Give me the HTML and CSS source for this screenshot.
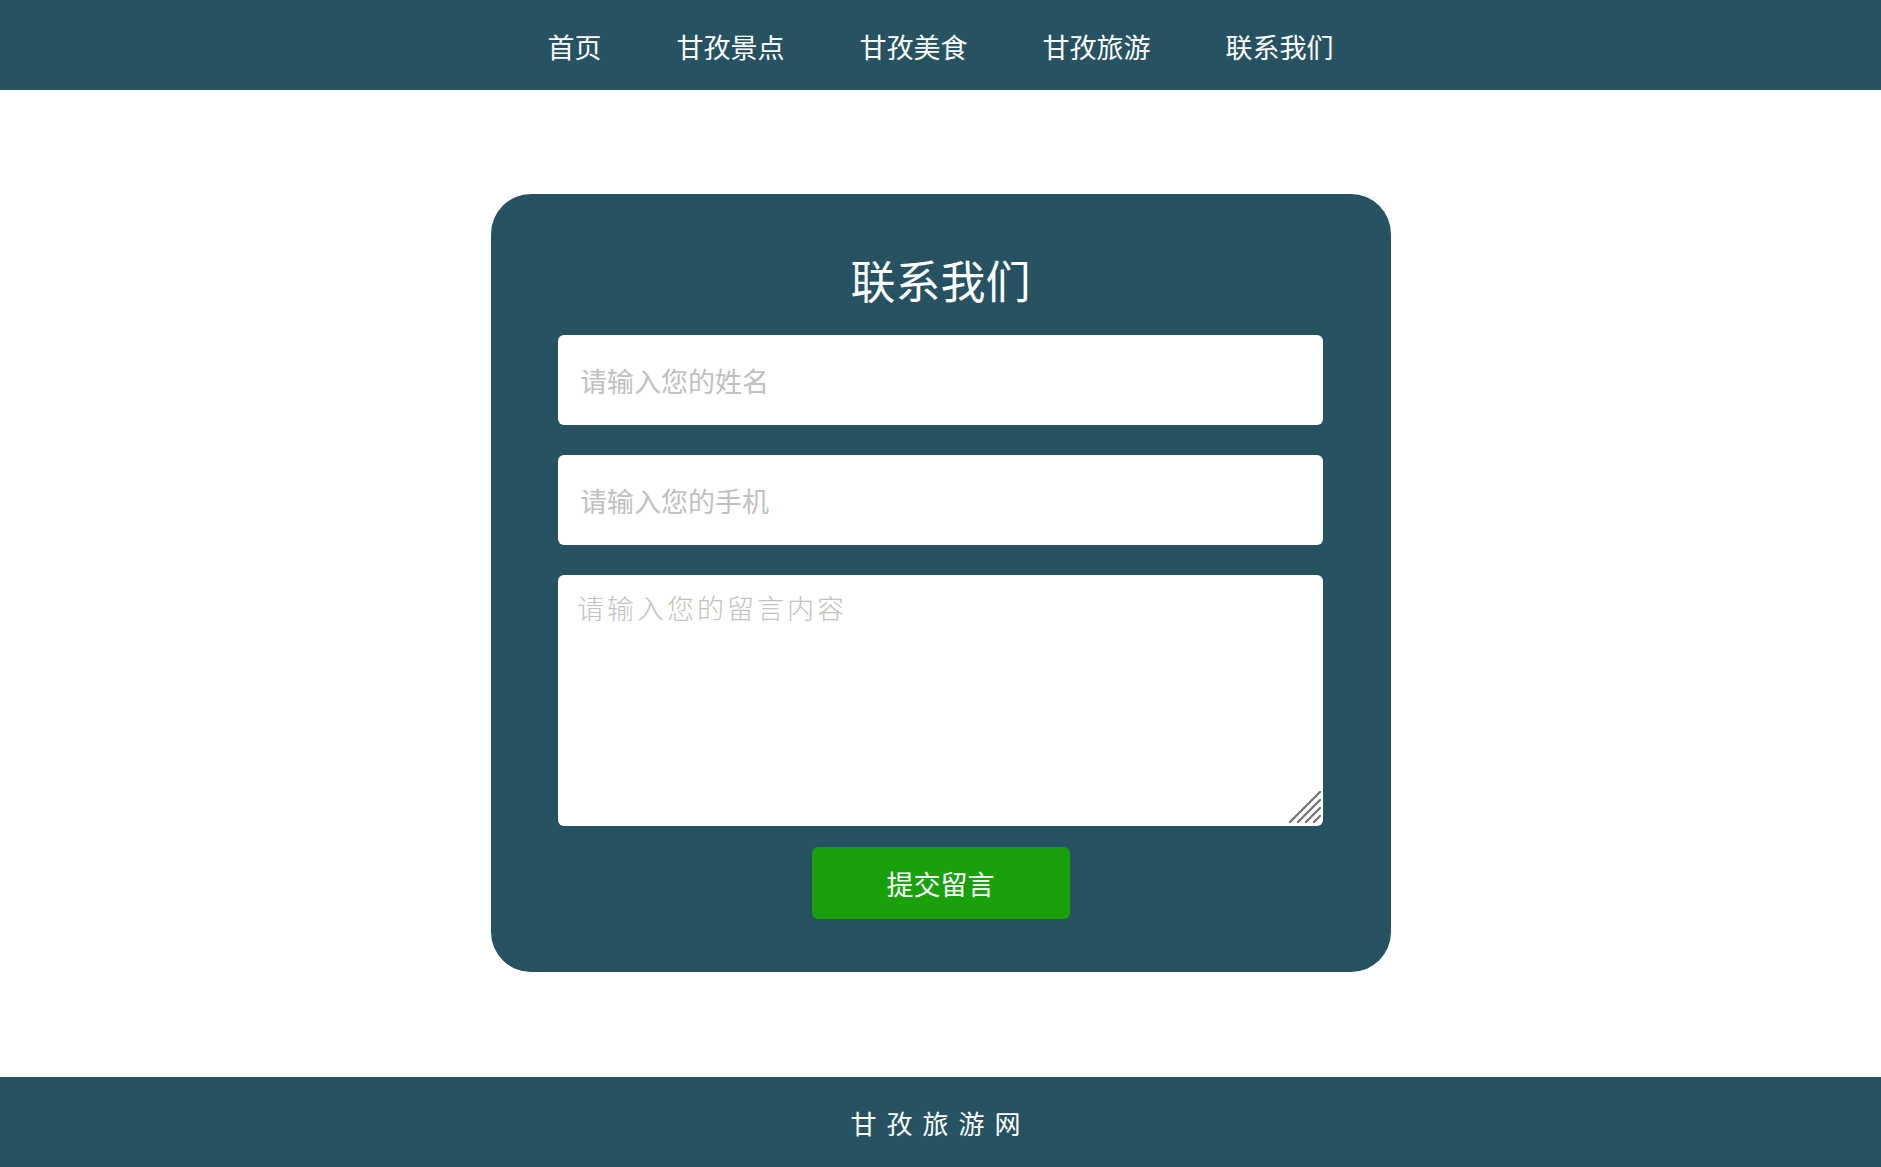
FILE: index.html
```html
<!DOCTYPE html>
<html lang="zh-CN">
<head>
    <meta charset="UTF-8">
    <title>联系我们 - 甘孜旅游网</title>
    <link rel="stylesheet" href="styles.css">
</head>
<body>
<header class="nav">
    <ul class="nav-list">
        <li><a href="#">首页</a></li>
        <li><a href="#">甘孜景点</a></li>
        <li><a href="#">甘孜美食</a></li>
        <li><a href="#">甘孜旅游</a></li>
        <li><a href="#">联系我们</a></li>
    </ul>
</header>
<main class="main">
    <form class="contact-card">
        <h2 class="contact-title">联系我们</h2>
        <input class="field" type="text" placeholder="请输入您的姓名">
        <input class="field" type="text" placeholder="请输入您的手机">
        <div class="message-box">
            <textarea class="message" placeholder="请输入您的留言内容"></textarea>
            <svg class="grip" width="32" height="32" viewBox="0 0 32 32">
                <path d="M1 31 L31 1 M9 31 L31 9 M17 31 L31 17 M25 31 L31 25" stroke="#777" stroke-width="2.4" stroke-linecap="round"/>
            </svg>
        </div>
        <button class="submit" type="button">提交留言</button>
    </form>
</main>
<footer class="footer">甘孜旅游网</footer>
</body>
</html>
```

FILE: styles.css
```css
* {
    box-sizing: border-box;
}
body {
    margin: 0;
    font-family: "Noto Sans CJK SC", "Noto Sans", sans-serif;
    background-color: #fff;
}
.nav {
    height: 90px;
    background-color: #265261;
}
.nav-list {
    display: flex;
    justify-content: center;
    align-items: center;
    gap: 75px;
    height: 100%;
    margin: 0;
    padding: 5px 0 0;
    list-style: none;
}
.nav-list a {
    color: #fff;
    font-size: 27px;
    line-height: 1;
    text-decoration: none;
}

.main {
    padding: 104px 0 105px;
}
.contact-card {
    display: flex;
    flex-direction: column;
    align-items: center;
    width: 900px;
    margin: 0 auto;
    padding: 63px 67.5px 53px;
    border-radius: 40px;
    background-color: #265261;
}
.contact-title {
    margin: 0 0 33px;
    color: #fff;
    font-size: 45px;
    font-weight: normal;
    line-height: 1;
}
.field {
    width: 100%;
    height: 90px;
    margin-bottom: 30px;
    padding: 0 22px;
    border: none;
    border-radius: 6px;
    outline: none;
    font-family: inherit;
    font-size: 27px;
}
.field::placeholder {
    color: #c0c0c0;
}
.message-box {
    position: relative;
    width: 100%;
}
.message {
    display: block;
    width: 100%;
    height: 251px;
    padding: 14px 19px;
    border: none;
    border-radius: 6px;
    outline: none;
    resize: none;
    font-family: "Noto Sans CJK SC", sans-serif;
    font-size: 27px;
    font-weight: 300;
    line-height: 1.4;
    letter-spacing: 3px;
}
.message::placeholder {
    color: #c2c2c2;
}
.grip {
    position: absolute;
    right: 2px;
    bottom: 3px;
    pointer-events: none;
}
.submit {
    width: 258px;
    height: 72px;
    margin-top: 21px;
    border: none;
    border-radius: 6px;
    background-color: #19a00a;
    color: #fff;
    font-family: inherit;
    font-size: 27px;
    cursor: pointer;
}

.footer {
    display: flex;
    justify-content: center;
    align-items: center;
    height: 90px;
    background-color: #265261;
    color: #fff;
    font-size: 26px;
    letter-spacing: 10px;
}
```
